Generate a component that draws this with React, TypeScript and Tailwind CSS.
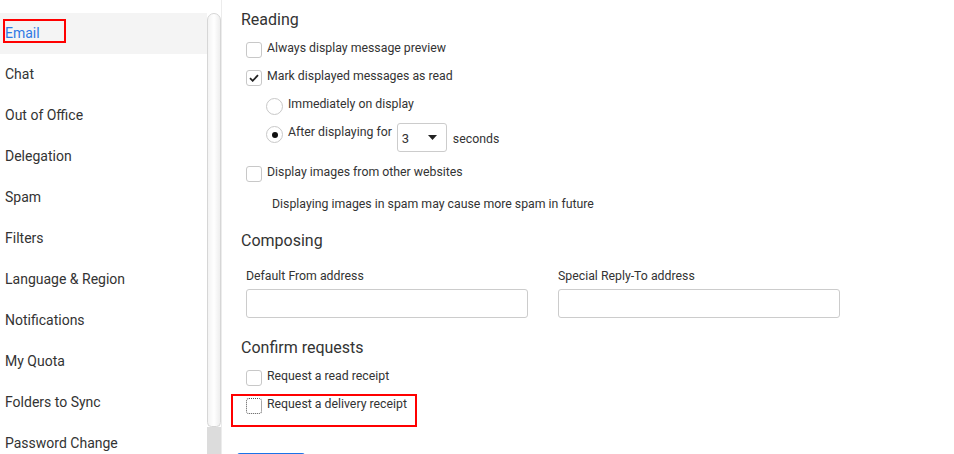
import { useState } from "react"

const navItems = [
  "Email",
  "Chat",
  "Out of Office",
  "Delegation",
  "Spam",
  "Filters",
  "Language & Region",
  "Notifications",
  "My Quota",
  "Folders to Sync",
  "Password Change",
]

const Checkbox = ({ checked, dotted }: { checked?: boolean; dotted?: boolean }) => (
  <span
    className={`mt-[5px] flex h-[16px] w-[16px] shrink-0 items-center justify-center rounded-[3px] bg-white ${
      dotted ? "border border-dotted border-[#555]" : "border border-[#c8c8c8]"
    }`}
  >
    {checked && (
      <svg width="10" height="8" viewBox="0 0 10 8">
        <path d="M1 4.2 L3.7 6.8 L9 1.2" fill="none" stroke="#222" strokeWidth="1.8" />
      </svg>
    )}
  </span>
)

const Radio = ({ checked }: { checked?: boolean }) => (
  <span className="mt-[5px] flex h-[17px] w-[17px] shrink-0 items-center justify-center rounded-full border border-[#c8c8c8] bg-white">
    {checked && <span className="h-[6px] w-[6px] rounded-full bg-[#111]" />}
  </span>
)

const CheckRow = ({ label, checked, dotted }: { label: string; checked?: boolean; dotted?: boolean }) => (
  <div className="flex h-[28px] items-start gap-[5px] pl-[5px]">
    <Checkbox checked={checked} dotted={dotted} />
    <span className="mt-[3px] leading-[16px]">{label}</span>
  </div>
)

export default function App() {
  const [active] = useState("Email")

  return (
    <div
      className="flex h-[454px] w-[954px] overflow-hidden bg-white text-[#333]"
      style={{ fontFamily: "Roboto, 'Liberation Sans', sans-serif" }}
    >
      {/* sidebar */}
      <div className="flex w-[222px] shrink-0 border-r border-[#ececec]">
        <div className="w-[207px] pt-[13px] text-[14px]">
          {navItems.map((item) => (
            <div
              key={item}
              className={`relative flex h-[41px] items-center pl-[5px] ${
                item === active ? "bg-[#f4f4f4] text-[#2f7ae5]" : ""
              }`}
            >
              {item}
              {item === active && (
                <span className="absolute left-[3px] top-[6px] h-[24px] w-[63px] border-2 border-[#f00]" />
              )}
            </div>
          ))}
        </div>
        <div className="flex w-[14px] flex-col bg-white pt-[13px]">
          <div className="h-[414px] rounded-t-[8px] rounded-b-[5px] border border-[#d6d6d6] bg-gradient-to-r from-[#f3f3f3] via-white to-[#eeeeee]" />
          <div className="flex-1 bg-[#dcdcdc]" />
        </div>
      </div>

      {/* content */}
      <div className="flex-1 pl-[19px] pt-[10px] text-[12.3px]">
        <h2 className="text-[16px] leading-[20px]">Reading</h2>
        <div className="mt-[7px]">
          <CheckRow label="Always display message preview" />
          <CheckRow label="Mark displayed messages as read" checked />
          <div className="flex h-[28px] items-start gap-[5px] pl-[25px]">
            <Radio />
            <span className="mt-[3px] leading-[16px]">Immediately on display</span>
          </div>
          <div className="flex h-[40px] items-start gap-[5px] pl-[25px]">
            <Radio checked />
            <span className="mt-[3px] leading-[16px]">After displaying for</span>
            <div className="mt-[2px] flex h-[29px] w-[50px] items-center justify-between rounded-[3px] border border-[#ccc] pl-[4px] pr-[9px] text-[13px]">
              <span className="mt-[3px]">3</span>
              <svg width="9" height="5" viewBox="0 0 9 5">
                <path d="M0 0 H9 L4.5 5 Z" fill="#222" />
              </svg>
            </div>
            <span className="ml-[1px] mt-[10px] leading-[16px]">seconds</span>
          </div>
          <CheckRow label="Display images from other websites" />
        </div>
        <p className="mt-[7px] pl-[31px] leading-[16px]">
          Displaying images in spam may cause more spam in future
        </p>

        <h2 className="mt-[19px] text-[16px] leading-[20px]">Composing</h2>
        <div className="mt-[17px] flex gap-[30px] pl-[5px]">
          <div className="w-[282px]">
            <label className="block leading-[16px]">Default From address</label>
            <input className="mt-[5px] h-[29px] w-full rounded-[3px] border border-[#ccc] bg-white" />
          </div>
          <div className="w-[282px]">
            <label className="block leading-[16px]">Special Reply-To address</label>
            <input className="mt-[5px] h-[29px] w-full rounded-[3px] border border-[#ccc] bg-white" />
          </div>
        </div>

        <h2 className="mt-[20px] text-[16px] leading-[20px]">Confirm requests</h2>
        <div className="mt-[7px]">
          <CheckRow label="Request a read receipt" />
          <div className="relative">
            <CheckRow label="Request a delivery receipt" dotted />
            <span className="absolute left-[-10px] top-[1px] h-[33px] w-[186px] border-2 border-[#f00]" />
          </div>
        </div>
        <div className="ml-[-4px] mt-[32px] h-[32px] w-[68px] shrink-0 rounded-[3px] bg-[#1a73e8]" />
      </div>
    </div>
  )
}
